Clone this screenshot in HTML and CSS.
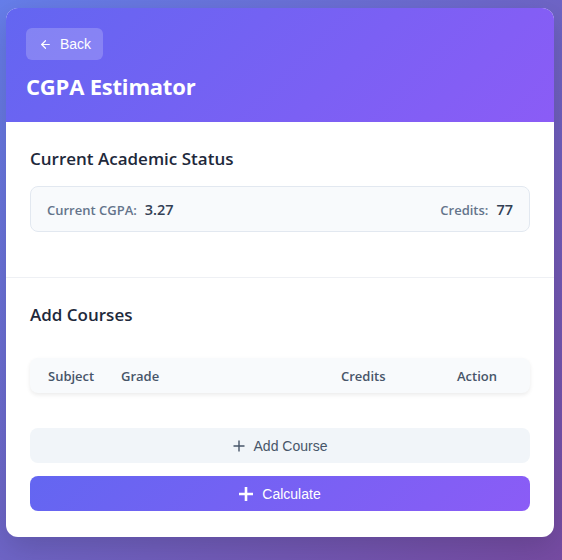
FILE: index.html
```html
<!DOCTYPE html>
<html>
<head>
<meta charset="utf-8">
<link rel="stylesheet" href="styles.css">
</head>
<body>
<div class="card">
  <header class="hero">
    <button class="back">
      <svg width="13" height="13" viewBox="0 0 24 24" fill="none" stroke="currentColor" stroke-width="2.2" stroke-linecap="round" stroke-linejoin="round"><path d="M19 12H5"/><path d="M12 19l-7-7 7-7"/></svg>
      <span>Back</span>
    </button>
    <h1 class="title">CGPA Estimator</h1>
  </header>
  <section class="section status">
    <h2 class="heading">Current Academic Status</h2>
    <div class="stats">
      <div class="stat"><span class="label">Current CGPA:</span><span class="value">3.27</span></div>
      <div class="stat"><span class="label">Credits:</span><span class="value">77</span></div>
    </div>
  </section>
  <section class="section courses">
    <h2 class="heading">Add Courses</h2>
    <div class="thead">
      <div class="th">Subject</div>
      <div class="th">Grade</div>
      <div class="th">Credits</div>
      <div class="th">Action</div>
    </div>
    <button class="add">
      <svg width="12" height="12" viewBox="0 0 12 12" fill="none" stroke="currentColor" stroke-width="1.4"><path d="M6 0.5v11M0.5 6h11"/></svg>
      <span>Add Course</span>
    </button>
    <button class="calc">
      <svg width="14" height="14" viewBox="0 0 14 14" fill="none" stroke="currentColor" stroke-width="2.6"><path d="M7 0v14M0 7h14"/></svg>
      <span>Calculate</span>
    </button>
  </section>
</div>
</body>
</html>
```
FILE: styles.css
```css
html, body { margin: 0; padding: 0; }
body {
  min-height: 560px;
  background: linear-gradient(135deg, #667eea 0%, #764ba2 100%);
  font-family: "Open Sans", "Noto Sans", sans-serif;
  padding: 8px 8px 0 6px;
  box-sizing: border-box;
}
.card {
  width: 548px;
  background: #fff;
  border-radius: 12px;
  overflow: hidden;
  box-shadow: 0 10px 30px rgba(0,0,0,0.15);
}
.hero {
  background: linear-gradient(135deg, #6366f1 0%, #8b5cf6 100%);
  padding: 20px 20px 20px 20px;
  display: flex;
  flex-direction: column;
  align-items: flex-start;
  gap: 11px;
}
.back {
  display: flex;
  align-items: center;
  gap: 8px;
  height: 32px;
  padding: 0 12px 0 13px;
  border: none;
  border-radius: 6px;
  background: rgba(255,255,255,0.2);
  color: #fff;
  font-family: "Liberation Sans", Arial, sans-serif;
  font-size: 14px;
}
.title {
  margin: 0;
  color: #fff;
  font-size: 22px;
  font-weight: 700;
  line-height: 31px;
  letter-spacing: -0.2px;
}
.section { padding: 24px; }
.status { border-bottom: 1px solid #eef0f4; padding-bottom: 24px; }
.heading {
  margin: 0;
  font-size: 17px;
  font-weight: 600;
  color: #1e293b;
  line-height: 25px;
}
.stats {
  margin: 15px 0 21px;
  height: 46px;
  box-sizing: border-box;
  border: 1px solid #e2e8f0;
  border-radius: 8px;
  background: #f8fafc;
  display: flex;
  justify-content: space-between;
  align-items: center;
  padding: 0 16px;
}
.stat { display: flex; align-items: baseline; gap: 8px; }
.label { font-size: 13px; color: #64748b; font-weight: 600; }
.value { font-size: 14.5px; color: #334155; font-weight: 600; }
.thead {
  margin-top: 31px;
  height: 35px;
  display: grid;
  grid-template-columns: 73px 220px 116px 1fr;
  align-items: center;
  background: #f8fafc;
  border-radius: 8px;
  box-shadow: 0 2px 4px rgba(0,0,0,0.08);
}
.th { padding-left: 18px; font-size: 13px; font-weight: 600; color: #475569; }
.add, .calc {
  width: 100%;
  height: 35px;
  border: none;
  border-radius: 8px;
  display: flex;
  align-items: center;
  justify-content: center;
  font-family: "Liberation Sans", Arial, sans-serif;
  font-size: 14px;
}
.add {
  margin-top: 35px;
  background: #f1f5f9;
  color: #475569;
  gap: 9px;
}
.calc {
  margin-top: 13px;
  background: linear-gradient(135deg, #6366f1 0%, #8b5cf6 100%);
  color: #fff;
  gap: 9px;
}
.courses { padding-bottom: 26px; }
```
